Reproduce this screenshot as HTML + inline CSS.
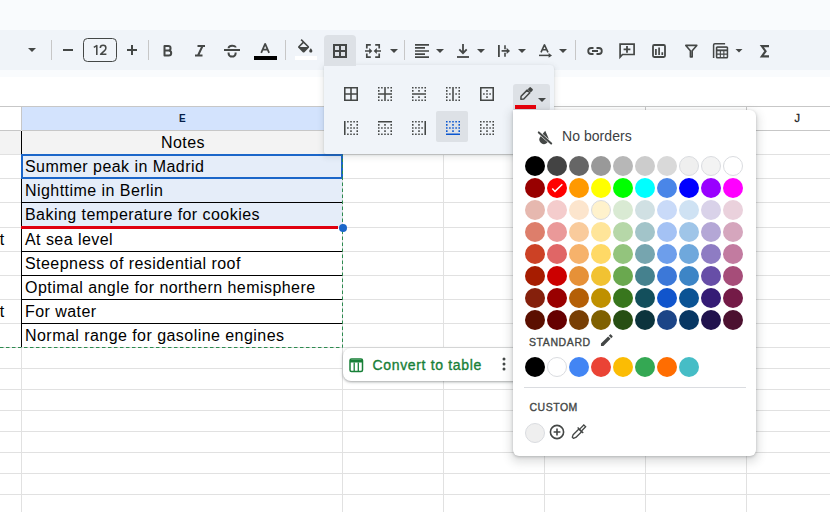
<!DOCTYPE html>
<html><head><meta charset="utf-8">
<style>
*{box-sizing:border-box;margin:0;padding:0}
html,body{width:830px;height:512px;overflow:hidden;background:#f9fbfd;font-family:"Liberation Sans",sans-serif;position:relative}
.a{position:absolute}
.ov{position:absolute;left:0;top:0}
.sep{position:absolute;top:40px;width:1px;height:20px;background:#c7c7c7}
.hl{position:absolute;left:0;width:830px;height:1px;background:#e1e1e1}
.vl{position:absolute;top:106px;width:1px;height:406px;background:#e1e1e1}
.cell{position:absolute;left:25px;font-size:16px;letter-spacing:0.45px;color:#000;white-space:nowrap;line-height:18px}
</style></head><body>
<div class="a" style="left:0;top:30px;width:830px;height:40px;background:#f0f4f9"></div>
<div class="sep" style="left:51px"></div><div class="sep" style="left:148px"></div><div class="sep" style="left:285px"></div><div class="sep" style="left:404px"></div><div class="sep" style="left:575px"></div>

<div class="a" style="left:0;top:77px;width:830px;height:435px;background:#fff"></div>
<div class="a" style="left:22px;top:107px;width:320px;height:23px;background:#d3e3fd"></div>
<div class="a" style="left:0;top:131px;width:342px;height:23px;background:#f3f3f3"></div>
<div class="a" style="left:22px;top:155px;width:320px;height:72px;background:#e5edf9"></div>
<div class="hl" style="top:106px;background:#c7c7c7"></div><div class="hl" style="top:130px;background:#c7c7c7"></div><div class="hl" style="top:154px"></div><div class="hl" style="top:178px"></div><div class="hl" style="top:202px"></div><div class="hl" style="top:227px"></div><div class="hl" style="top:251px"></div><div class="hl" style="top:275px"></div><div class="hl" style="top:299px"></div><div class="hl" style="top:323px"></div><div class="hl" style="top:347px"></div><div class="hl" style="top:368px"></div><div class="hl" style="top:389px"></div><div class="hl" style="top:410px"></div><div class="hl" style="top:431px"></div><div class="hl" style="top:452px"></div><div class="hl" style="top:473px"></div><div class="hl" style="top:494px"></div><div class="vl" style="left:21px"></div><div class="vl" style="left:342px"></div><div class="vl" style="left:443px"></div><div class="vl" style="left:544px"></div><div class="vl" style="left:645px"></div><div class="vl" style="left:746px"></div><div class="a" style="left:21px;top:106px;width:1px;height:24px;background:#c7c7c7"></div><div class="a" style="left:342px;top:106px;width:1px;height:24px;background:#c7c7c7"></div><div class="a" style="left:443px;top:106px;width:1px;height:24px;background:#c7c7c7"></div><div class="a" style="left:544px;top:106px;width:1px;height:24px;background:#c7c7c7"></div><div class="a" style="left:645px;top:106px;width:1px;height:24px;background:#c7c7c7"></div><div class="a" style="left:746px;top:106px;width:1px;height:24px;background:#c7c7c7"></div>
<div class="a" style="left:21px;top:131px;width:1px;height:216px;background:#000"></div>
<div class="a" style="left:22px;top:178px;width:321px;height:1px;background:#000"></div><div class="a" style="left:22px;top:202px;width:321px;height:1px;background:#000"></div><div class="a" style="left:22px;top:251px;width:321px;height:1px;background:#000"></div><div class="a" style="left:22px;top:275px;width:321px;height:1px;background:#000"></div><div class="a" style="left:22px;top:299px;width:321px;height:1px;background:#000"></div><div class="a" style="left:22px;top:323px;width:321px;height:1px;background:#000"></div>
<div class="a" style="left:21px;top:226px;width:317px;height:3px;background:#e0000f"></div>
<div class="a" style="left:21px;top:154px;width:322px;height:25px;border:2px solid #1b66c9"></div>

<svg class="ov" width="830" height="512" viewBox="0 0 830 512">
 <path d="M0 347.5H342.5V155" stroke="#2e8b50" stroke-width="1" stroke-dasharray="3.5 2.5" fill="none"/>
</svg>
<div class="a" style="left:339px;top:224px;width:8px;height:8px;border-radius:50%;background:#1b66c9"></div>
<div class="a" style="left:179px;top:113px;font-size:10px;color:#041e49;font-weight:bold">E</div>
<div class="a" style="left:794.5px;top:112px;font-size:11px;color:#1f1f1f;-webkit-text-stroke:0.3px #1f1f1f">J</div>
<div class="cell" style="left:161px;top:134px">Notes</div>
<div class="cell" style="top:158px">Summer peak in Madrid</div><div class="cell" style="top:182px">Nighttime in Berlin</div><div class="cell" style="top:206px">Baking temperature for cookies</div><div class="cell" style="top:231px">At sea level</div><div class="cell" style="top:255px">Steepness of residential roof</div><div class="cell" style="top:279px">Optimal angle for northern hemisphere</div><div class="cell" style="top:303px">For water</div><div class="cell" style="top:327px">Normal range for gasoline engines</div>
<div class="cell" style="left:-0.3px;top:231px">t</div>
<div class="cell" style="left:-0.3px;top:303px">t</div>

<div class="a" style="left:343px;top:348px;width:200px;height:33px;background:#fff;border-radius:8px;box-shadow:0 1px 2px rgba(60,64,67,.3),0 1px 3px 1px rgba(60,64,67,.15)"></div>
<svg class="ov" width="830" height="512" viewBox="0 0 830 512">
 <rect x="350" y="359" width="12.5" height="12.5" rx="1.5" stroke="#188038" stroke-width="1.5" fill="none"/>
 <path d="M350 361.2h12.5" stroke="#188038" stroke-width="2.6"/>
 <path d="M354.2 362.5v9M358.3 362.5v9" stroke="#188038" stroke-width="1.3"/>
 <circle cx="504" cy="359" r="1.5" fill="#444746"/><circle cx="504" cy="364" r="1.5" fill="#444746"/><circle cx="504" cy="369" r="1.5" fill="#444746"/>
</svg>
<div class="a" style="left:372.5px;top:357px;font-size:14px;color:#188038;letter-spacing:0.66px;-webkit-text-stroke:0.35px #188038">Convert to table</div>


<svg class="ov" width="830" height="512" viewBox="0 0 830 512">
 <path d="M28 48h8l-4.0 4.0z" fill="#444746"/>
 <rect x="63" y="49" width="10" height="2" fill="#444746"/>
 <rect x="83.5" y="38.5" width="33" height="23" rx="4" fill="none" stroke="#444746" stroke-width="1"/>
 <path d="M127 50h10M132 45v10" stroke="#444746" stroke-width="2"/>
 <path d="M93.8 47.3L96.8 45.6V55" stroke="#444746" stroke-width="1.55" fill="none" stroke-linejoin="round"/>
 <path d="M100.3 48C100.3 46.3 101.5 45.3 103.1 45.3C104.8 45.3 105.9 46.4 105.9 47.9C105.9 49.1 105.3 49.9 104.3 50.9L100.6 54.3H106.4" stroke="#444746" stroke-width="1.55" fill="none" stroke-linejoin="round"/>
 <path d="M164.5 46h3.8a2.25 2.25 0 0 1 0 4.5h-3.8zM164.5 50.5h4.2a2.5 2.5 0 0 1 0 5h-4.2z" fill="none" stroke="#444746" stroke-width="2" stroke-linejoin="round"/>
 <path d="M197.5 46h7.5M195 55.5h7.5M202.5 46l-4.5 9.5" stroke="#444746" stroke-width="2" fill="none"/>
 <path d="M224 50h16" stroke="#444746" stroke-width="2"/>
 <path d="M228.6 48.3C228.4 45 235.6 45 235.6 47.6M228.6 52.6v0.8a3.5 3.2 0 0 0 7 0v-0.8" stroke="#444746" stroke-width="2" fill="none"/>
 <path d="M261.2 52.8L265.1 43.8h0.1L269.1 52.8M262.6 49.5h5.3" stroke="#444746" stroke-width="1.75" fill="none" stroke-linejoin="round"/>
 <rect x="254" y="56" width="23" height="4" fill="#000"/>
 <path transform="translate(295.6 39) scale(0.8)" d="M16.56 8.94L7.62 0 6.21 1.41l2.38 2.38-5.15 5.15c-.59.59-.59 1.54 0 2.12l5.5 5.5c.29.29.68.44 1.06.44s.77-.15 1.06-.44l5.5-5.5c.59-.58.59-1.53 0-2.12zM5.21 10L10 5.21 14.79 10H5.21zM19 11.5s-2 2.17-2 3.5c0 1.1.9 2 2 2s2-.9 2-2c0-1.33-2-3.5-2-3.5z" fill="#444746"/>
 <rect x="295" y="56" width="22" height="4" fill="#fff"/>
 <path d="M324 39a4 4 0 0 1 4-4h24a4 4 0 0 1 4 4v26h-32z" fill="#dde1e6"/>
 <path d="M334 45h12v12h-12zM340 45v12M334 51h12" stroke="#444746" stroke-width="2" fill="none"/>
 <path d="M370.8 44.8H366.8V48.4M366.8 53.4V57.2H370.8M375.2 44.8H379.2V48.4M379.2 53.4V57.2H375.2" stroke="#444746" stroke-width="1.7" fill="none"/>
 <path d="M365 51h5M381 51h-5" stroke="#444746" stroke-width="1.7"/>
 <path d="M369.2 48.1l3.1 2.9-3.1 2.9zM376.8 48.1l-3.1 2.9 3.1 2.9z" fill="#444746"/>
 <path d="M390 49h8l-4.0 4.0z" fill="#444746"/>
 <path d="M415 44.8h14M415 47.9h10M415 51h14M415 54.1h10M415 57.2h14" stroke="#444746" stroke-width="1.7"/>
 <path d="M436 49h8l-4.0 4.0z" fill="#444746"/>
 <path d="M463 44v9" stroke="#444746" stroke-width="1.8"/>
 <path d="M459.3 49.3l3.7 3.9 3.7-3.9" stroke="#444746" stroke-width="1.8" fill="none"/>
 <path d="M457 57h12" stroke="#444746" stroke-width="1.8"/>
 <path d="M477 49h8l-4.0 4.0z" fill="#444746"/>
 <path d="M498.9 45v12" stroke="#444746" stroke-width="1.8"/>
 <path d="M505 45.2V49.2M505 52.8V56.8" stroke="#444746" stroke-width="1.6"/>
 <path d="M501.6 50.9h5.5" stroke="#444746" stroke-width="1.7"/>
 <path d="M506.6 47.7l3.4 3.2-3.4 3.2z" fill="#444746"/>
 <path d="M518 49h8l-4.0 4.0z" fill="#444746"/>
 <path d="M541 52.4L544.4 44.9h0.1L548 52.4M542.3 49.7h4.5" stroke="#444746" stroke-width="1.6" fill="none" stroke-linejoin="round"/>
 <path d="M539 55.4h10" stroke="#444746" stroke-width="1.5"/>
 <path d="M548.6 53l3.4 2.4-3.4 2.4z" fill="#444746"/>
 <path d="M559 49h8l-4.0 4.0z" fill="#444746"/>
 <path d="M593.5 48h-2.3a3 3 0 0 0 0 6h2.3M596.5 48h2.3a3 3 0 0 1 0 6h-2.3M592 51h6" stroke="#444746" stroke-width="1.8" fill="none"/>
 <path d="M620.1 44.1h14v10.4h-11.6l-2.4 2.6z" stroke="#444746" stroke-width="1.7" fill="none" stroke-linejoin="miter"/>
 <path d="M627 45.9v6.8M623.6 49.3h6.8" stroke="#444746" stroke-width="1.8"/>
 <rect x="653" y="45" width="12" height="12" rx="1.2" stroke="#444746" stroke-width="1.8" fill="none"/>
 <path d="M655.9 49v6M659.1 47.5v7.5M662.3 52.2v2.8" stroke="#444746" stroke-width="1.7"/>
 <path d="M685.8 45.4h11l-4.6 5.4v6.1h-1.8v-6.1z" stroke="#444746" stroke-width="1.6" fill="none" stroke-linejoin="round"/>
 <path d="M713.6 58v-12.9a1.3 1.3 0 0 1 1.3-1.3h10.2" stroke="#444746" stroke-width="1.5" fill="none"/>
 <rect x="715.8" y="46.2" width="12.4" height="12.4" rx="1.5" fill="#444746"/>
 <path d="M717.4 51.2h2.4v2.2h-2.4zM720.9 51.2h2.4v2.2h-2.4zM724.4 51.2h2.3v2.2h-2.3zM717.4 54.7h2.4v2.3h-2.4zM720.9 54.7h2.4v2.3h-2.4zM724.4 54.7h2.3v2.3h-2.3z" fill="#f0f4f9"/>
 <rect x="717.4" y="47.9" width="9.3" height="1.5" fill="#f0f4f9"/>
 <path d="M735.5 49h7l-3.5 3.5z" fill="#444746"/>
 <path d="M769 46.1h-7.2l3.8 5.1-3.8 5.2h7.2" stroke="#444746" stroke-width="2.1" fill="none" stroke-linejoin="miter"/>
</svg>

<div class="a" style="left:324px;top:65px;width:230px;height:89px;background:#f0f4f9;border-radius:0 4px 2px 2px;box-shadow:0 1px 2px rgba(60,64,67,.18),0 2px 6px 1px rgba(60,64,67,.12)"></div>
<div class="a" style="left:324px;top:60px;width:32px;height:6px;background:#dde1e6"></div>
<svg class="ov" width="830" height="512" viewBox="0 0 830 512">
 <rect x="436" y="111" width="32" height="31" rx="2" fill="#dde1e6"/>
 <rect x="513" y="84" width="37" height="27" rx="3" fill="#dde1e6"/>
 <path transform="translate(341.667 84.667) scale(0.7778)" d="M3 3h18v2h-18zM3 19h18v2h-18zM3 3h2v18h-2zM19 3h2v18h-2zM3 11h18v2h-18zM11 3h2v18h-2z" fill="#444746"/><path transform="translate(375.667 84.667) scale(0.7778)" d="M3 11h18v2h-18zM11 3h2v18h-2zM3 3h2v2h-2zM3 7h2v2h-2zM3 15h2v2h-2zM3 19h2v2h-2zM7 3h2v2h-2zM7 19h2v2h-2zM15 3h2v2h-2zM15 19h2v2h-2zM19 3h2v2h-2zM19 7h2v2h-2zM19 15h2v2h-2zM19 19h2v2h-2z" fill="#444746"/><path transform="translate(409.667 84.667) scale(0.7778)" d="M3 11h18v2h-18zM3 3h2v2h-2zM3 7h2v2h-2zM3 15h2v2h-2zM3 19h2v2h-2zM7 3h2v2h-2zM7 19h2v2h-2zM11 3h2v2h-2zM11 7h2v2h-2zM11 15h2v2h-2zM11 19h2v2h-2zM15 3h2v2h-2zM15 19h2v2h-2zM19 3h2v2h-2zM19 7h2v2h-2zM19 15h2v2h-2zM19 19h2v2h-2z" fill="#444746"/><path transform="translate(443.667 84.667) scale(0.7778)" d="M11 3h2v18h-2zM3 3h2v2h-2zM3 7h2v2h-2zM3 11h2v2h-2zM3 15h2v2h-2zM3 19h2v2h-2zM7 3h2v2h-2zM7 11h2v2h-2zM7 19h2v2h-2zM15 3h2v2h-2zM15 11h2v2h-2zM15 19h2v2h-2zM19 3h2v2h-2zM19 7h2v2h-2zM19 11h2v2h-2zM19 15h2v2h-2zM19 19h2v2h-2z" fill="#444746"/><path transform="translate(477.667 84.667) scale(0.7778)" d="M3 3h18v2h-18zM3 19h18v2h-18zM3 3h2v18h-2zM19 3h2v18h-2zM7 11h2v2h-2zM11 7h2v2h-2zM11 11h2v2h-2zM11 15h2v2h-2zM15 11h2v2h-2z" fill="#444746"/><path transform="translate(341.667 118.667) scale(0.7778)" d="M3 3h2v18h-2zM7 3h2v2h-2zM7 11h2v2h-2zM7 19h2v2h-2zM11 3h2v2h-2zM11 7h2v2h-2zM11 11h2v2h-2zM11 15h2v2h-2zM11 19h2v2h-2zM15 3h2v2h-2zM15 11h2v2h-2zM15 19h2v2h-2zM19 3h2v2h-2zM19 7h2v2h-2zM19 11h2v2h-2zM19 15h2v2h-2zM19 19h2v2h-2z" fill="#444746"/><path transform="translate(375.667 118.667) scale(0.7778)" d="M3 3h18v2h-18zM3 7h2v2h-2zM3 11h2v2h-2zM3 15h2v2h-2zM3 19h2v2h-2zM7 11h2v2h-2zM7 19h2v2h-2zM11 7h2v2h-2zM11 11h2v2h-2zM11 15h2v2h-2zM11 19h2v2h-2zM15 11h2v2h-2zM15 19h2v2h-2zM19 7h2v2h-2zM19 11h2v2h-2zM19 15h2v2h-2zM19 19h2v2h-2z" fill="#444746"/><path transform="translate(409.667 118.667) scale(0.7778)" d="M19 3h2v18h-2zM3 3h2v2h-2zM3 7h2v2h-2zM3 11h2v2h-2zM3 15h2v2h-2zM3 19h2v2h-2zM7 3h2v2h-2zM7 11h2v2h-2zM7 19h2v2h-2zM11 3h2v2h-2zM11 7h2v2h-2zM11 11h2v2h-2zM11 15h2v2h-2zM11 19h2v2h-2zM15 3h2v2h-2zM15 11h2v2h-2zM15 19h2v2h-2z" fill="#444746"/><path transform="translate(443.667 118.667) scale(0.7778)" d="M3 19h18v2h-18zM3 3h2v2h-2zM3 7h2v2h-2zM3 11h2v2h-2zM3 15h2v2h-2zM7 3h2v2h-2zM7 11h2v2h-2zM11 3h2v2h-2zM11 7h2v2h-2zM11 11h2v2h-2zM11 15h2v2h-2zM15 3h2v2h-2zM15 11h2v2h-2zM19 3h2v2h-2zM19 7h2v2h-2zM19 11h2v2h-2zM19 15h2v2h-2z" fill="#0b57d0"/><path transform="translate(477.667 118.667) scale(0.7778)" d="M3 3h2v2h-2zM3 7h2v2h-2zM3 11h2v2h-2zM3 15h2v2h-2zM3 19h2v2h-2zM7 3h2v2h-2zM7 11h2v2h-2zM7 19h2v2h-2zM11 3h2v2h-2zM11 7h2v2h-2zM11 11h2v2h-2zM11 15h2v2h-2zM11 19h2v2h-2zM15 3h2v2h-2zM15 11h2v2h-2zM15 19h2v2h-2zM19 3h2v2h-2zM19 7h2v2h-2zM19 11h2v2h-2zM19 15h2v2h-2zM19 19h2v2h-2z" fill="#444746"/>
 <g transform="translate(520.3 99.7) rotate(-45)"><path d="M0.8 0L3 -1.9H11.6V1.9H3Z" fill="none" stroke="#444746" stroke-width="1.5" stroke-linejoin="round"/><rect x="12.6" y="-2.2" width="3.6" height="4.4" rx="1" fill="#444746"/></g>
 <path d="M538 98h8l-4.0 4.0z" fill="#444746"/>
 <rect x="515" y="105" width="21" height="4" fill="#e8000b"/>
</svg>

<div class="a" style="left:513px;top:110px;width:243px;height:346px;background:#fff;border-radius:0 6px 6px 6px;box-shadow:0 1px 3px rgba(60,64,67,.3),0 4px 8px 3px rgba(60,64,67,.15)"></div>
<svg class="ov" width="830" height="512" viewBox="0 0 830 512">
 <circle cx="535" cy="166" r="10" fill="#000000"/><circle cx="557" cy="166" r="10" fill="#434343"/><circle cx="579" cy="166" r="10" fill="#666666"/><circle cx="601" cy="166" r="10" fill="#999999"/><circle cx="623" cy="166" r="10" fill="#b7b7b7"/><circle cx="645" cy="166" r="10" fill="#cccccc"/><circle cx="667" cy="166" r="10" fill="#d9d9d9"/><circle cx="689" cy="166" r="9.5" fill="#efefef" stroke="#dadce0" stroke-width="1"/><circle cx="711" cy="166" r="9.5" fill="#f3f3f3" stroke="#dadce0" stroke-width="1"/><circle cx="733" cy="166" r="9.5" fill="#ffffff" stroke="#dadce0" stroke-width="1"/><circle cx="535" cy="188" r="10" fill="#980000"/><circle cx="557" cy="188" r="10" fill="#ff0000"/><circle cx="579" cy="188" r="10" fill="#ff9900"/><circle cx="601" cy="188" r="10" fill="#ffff00"/><circle cx="623" cy="188" r="10" fill="#00ff00"/><circle cx="645" cy="188" r="10" fill="#00ffff"/><circle cx="667" cy="188" r="10" fill="#4a86e8"/><circle cx="689" cy="188" r="10" fill="#0000ff"/><circle cx="711" cy="188" r="10" fill="#9900ff"/><circle cx="733" cy="188" r="10" fill="#ff00ff"/><circle cx="535" cy="210" r="10" fill="#e6b8af"/><circle cx="557" cy="210" r="10" fill="#f4cccc"/><circle cx="579" cy="210" r="10" fill="#fce5cd"/><circle cx="601" cy="210" r="9.5" fill="#fff2cc" stroke="#dadce0" stroke-width="1"/><circle cx="623" cy="210" r="10" fill="#d9ead3"/><circle cx="645" cy="210" r="10" fill="#d0e0e3"/><circle cx="667" cy="210" r="10" fill="#c9daf8"/><circle cx="689" cy="210" r="10" fill="#cfe2f3"/><circle cx="711" cy="210" r="10" fill="#d9d2e9"/><circle cx="733" cy="210" r="10" fill="#ead1dc"/><circle cx="535" cy="232" r="10" fill="#dd7e6b"/><circle cx="557" cy="232" r="10" fill="#ea9999"/><circle cx="579" cy="232" r="10" fill="#f9cb9c"/><circle cx="601" cy="232" r="10" fill="#ffe599"/><circle cx="623" cy="232" r="10" fill="#b6d7a8"/><circle cx="645" cy="232" r="10" fill="#a2c4c9"/><circle cx="667" cy="232" r="10" fill="#a4c2f4"/><circle cx="689" cy="232" r="10" fill="#9fc5e8"/><circle cx="711" cy="232" r="10" fill="#b4a7d6"/><circle cx="733" cy="232" r="10" fill="#d5a6bd"/><circle cx="535" cy="254" r="10" fill="#cc4125"/><circle cx="557" cy="254" r="10" fill="#e06666"/><circle cx="579" cy="254" r="10" fill="#f6b26b"/><circle cx="601" cy="254" r="10" fill="#ffd966"/><circle cx="623" cy="254" r="10" fill="#93c47d"/><circle cx="645" cy="254" r="10" fill="#76a5af"/><circle cx="667" cy="254" r="10" fill="#6d9eeb"/><circle cx="689" cy="254" r="10" fill="#6fa8dc"/><circle cx="711" cy="254" r="10" fill="#8e7cc3"/><circle cx="733" cy="254" r="10" fill="#c27ba0"/><circle cx="535" cy="276" r="10" fill="#a61c00"/><circle cx="557" cy="276" r="10" fill="#cc0000"/><circle cx="579" cy="276" r="10" fill="#e69138"/><circle cx="601" cy="276" r="10" fill="#f1c232"/><circle cx="623" cy="276" r="10" fill="#6aa84f"/><circle cx="645" cy="276" r="10" fill="#45818e"/><circle cx="667" cy="276" r="10" fill="#3c78d8"/><circle cx="689" cy="276" r="10" fill="#3d85c6"/><circle cx="711" cy="276" r="10" fill="#674ea7"/><circle cx="733" cy="276" r="10" fill="#a64d79"/><circle cx="535" cy="298" r="10" fill="#85200c"/><circle cx="557" cy="298" r="10" fill="#990000"/><circle cx="579" cy="298" r="10" fill="#b45f06"/><circle cx="601" cy="298" r="10" fill="#bf9000"/><circle cx="623" cy="298" r="10" fill="#38761d"/><circle cx="645" cy="298" r="10" fill="#134f5c"/><circle cx="667" cy="298" r="10" fill="#1155cc"/><circle cx="689" cy="298" r="10" fill="#0b5394"/><circle cx="711" cy="298" r="10" fill="#351c75"/><circle cx="733" cy="298" r="10" fill="#741b47"/><circle cx="535" cy="320" r="10" fill="#5b0f00"/><circle cx="557" cy="320" r="10" fill="#660000"/><circle cx="579" cy="320" r="10" fill="#783f04"/><circle cx="601" cy="320" r="10" fill="#7f6000"/><circle cx="623" cy="320" r="10" fill="#274e13"/><circle cx="645" cy="320" r="10" fill="#0c343d"/><circle cx="667" cy="320" r="10" fill="#1c4587"/><circle cx="689" cy="320" r="10" fill="#073763"/><circle cx="711" cy="320" r="10" fill="#20124d"/><circle cx="733" cy="320" r="10" fill="#4c1130"/><circle cx="535" cy="367" r="10" fill="#000000"/><circle cx="557" cy="367" r="9.5" fill="#ffffff" stroke="#dadce0" stroke-width="1"/><circle cx="579" cy="367" r="10" fill="#4285f4"/><circle cx="601" cy="367" r="10" fill="#ea4335"/><circle cx="623" cy="367" r="10" fill="#fbbc04"/><circle cx="645" cy="367" r="10" fill="#34a853"/><circle cx="667" cy="367" r="10" fill="#ff6d01"/><circle cx="689" cy="367" r="10" fill="#46bdc6"/>
 <path d="M552.3 188.6l2.7 2.8 7.3-7.2" stroke="#fff" stroke-width="1.5" fill="none"/>
 <path transform="translate(544 139.5) rotate(8)" d="M0 -8.8L3.89 -2.46A4.6 4.6 0 1 1 -3.89 -2.46Z" fill="#444746"/>
 <path d="M537 130.8l15.6 13.9" stroke="#fff" stroke-width="3.0"/>
 <path d="M538.8 132.4l12.4 11.1" stroke="#444746" stroke-width="2" stroke-linecap="round"/>
 <path transform="translate(599 332.4) scale(0.65)" d="M3 17.25V21h3.75L17.81 9.94l-3.75-3.75L3 17.25zM20.71 7.04c.39-.39.39-1.02 0-1.41l-2.34-2.34c-.39-.39-1.02-.39-1.41 0l-1.83 1.83 3.75 3.75 1.83-1.83z" fill="#444746"/>
 <rect x="524" y="387" width="222" height="1" fill="#dadce0"/>
 <circle cx="535" cy="433" r="9.5" fill="#efefef" stroke="#dadce0" stroke-width="1"/>
 <circle cx="557" cy="432" r="6.6" fill="none" stroke="#444746" stroke-width="1.6"/>
 <path d="M557 428.6v6.8M553.6 432h6.8" stroke="#444746" stroke-width="1.6"/>
 <g transform="translate(573.2 437.4) rotate(-45)"><path d="M-0.5 -0.8L1.8 -1.9H10V1.9H1.8L-0.5 0.8Z" stroke="#444746" stroke-width="1.3" fill="none" stroke-linejoin="round"/><path d="M10.2 -3.9V3.9" stroke="#444746" stroke-width="1.4"/><path d="M10.8 -1.3H16.3V1.3H10.8" stroke="#444746" stroke-width="1.3" fill="none"/></g>
</svg>
<div class="a" style="left:562px;top:128px;font-size:14px;color:#3c4043;letter-spacing:0.05px">No borders</div>
<div class="a" style="left:529px;top:336px;font-size:10.5px;color:#444746;letter-spacing:0.6px;-webkit-text-stroke:0.35px #444746">STANDARD</div>
<div class="a" style="left:529.5px;top:401px;font-size:10.5px;color:#444746;letter-spacing:0.5px;-webkit-text-stroke:0.35px #444746">CUSTOM</div>

</body></html>
